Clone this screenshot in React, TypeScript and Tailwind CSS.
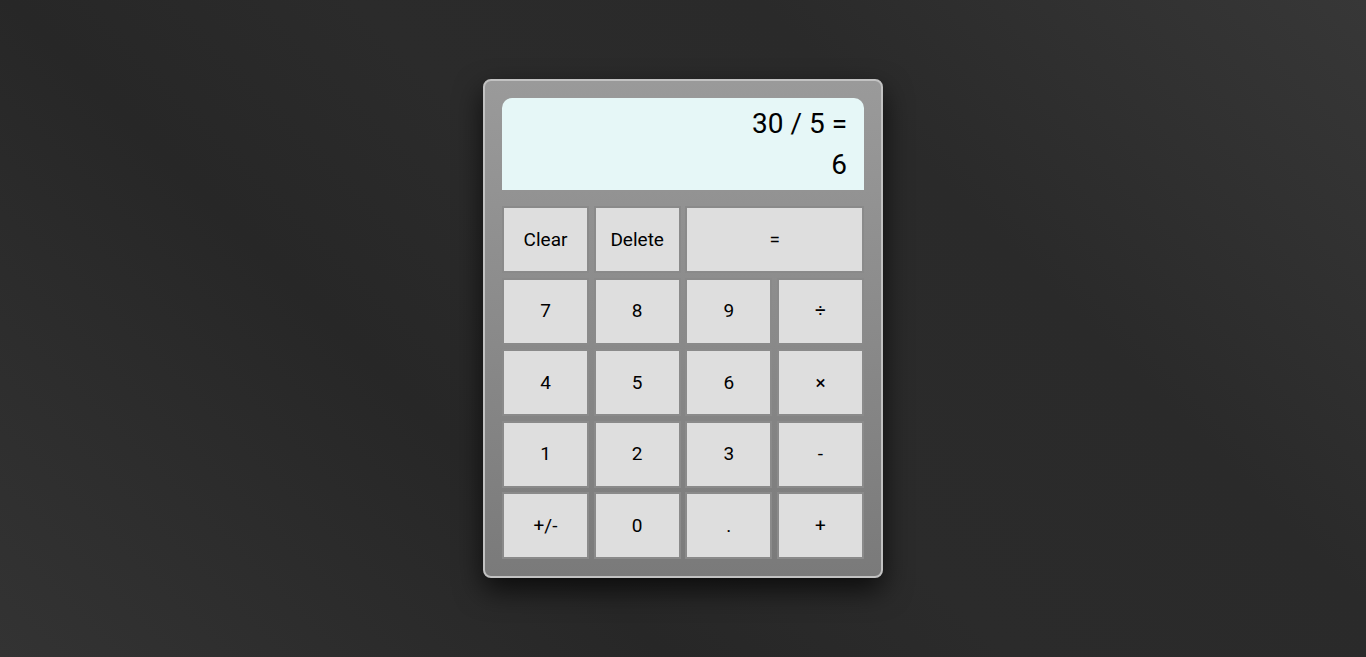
const keys: { label: string; wide?: boolean }[] = [
  { label: 'Clear' },
  { label: 'Delete' },
  { label: '=', wide: true },
  { label: '7' },
  { label: '8' },
  { label: '9' },
  { label: '÷' },
  { label: '4' },
  { label: '5' },
  { label: '6' },
  { label: '×' },
  { label: '1' },
  { label: '2' },
  { label: '3' },
  { label: '-' },
  { label: '+/-' },
  { label: '0' },
  { label: '.' },
  { label: '+' },
];

function Key({ label, wide }: { label: string; wide?: boolean }) {
  return (
    <button
      type="button"
      className={`flex items-center justify-center border-2 border-[#8a8a8a] bg-[#dedede] pt-px text-[19px] font-normal text-black ${wide ? 'col-span-2' : ''}`}
    >
      {label}
    </button>
  );
}

export default function App() {
  return (
    <div className="flex min-h-screen items-center justify-center bg-[linear-gradient(45deg,#333333_0%,#272727_33%,#2b2b2b_50%,#2a2a2a_70%,#373737_100%)] font-['Roboto','Liberation_Sans',sans-serif]">
      <div className="w-[400px] rounded-[8px] border-2 border-[#c2c2c2] bg-[linear-gradient(180deg,#9a9a9a_0%,#7a7a7a_100%)] p-[17px] shadow-[0_12px_28px_rgba(0,0,0,0.7)]">
        <div className="rounded-t-[10px] bg-[#e6f7f7] py-[5px] pr-[17px] text-right text-[28px] leading-[41px] text-black">
          <div>30 / 5 =</div>
          <div>6</div>
        </div>
        <div className="mt-[16px] grid grid-cols-4 grid-rows-[repeat(5,67px)] gap-x-[4.67px] gap-y-[4.5px]">
          {keys.map((key) => (
            <Key key={key.label} {...key} />
          ))}
        </div>
      </div>
    </div>
  );
}
